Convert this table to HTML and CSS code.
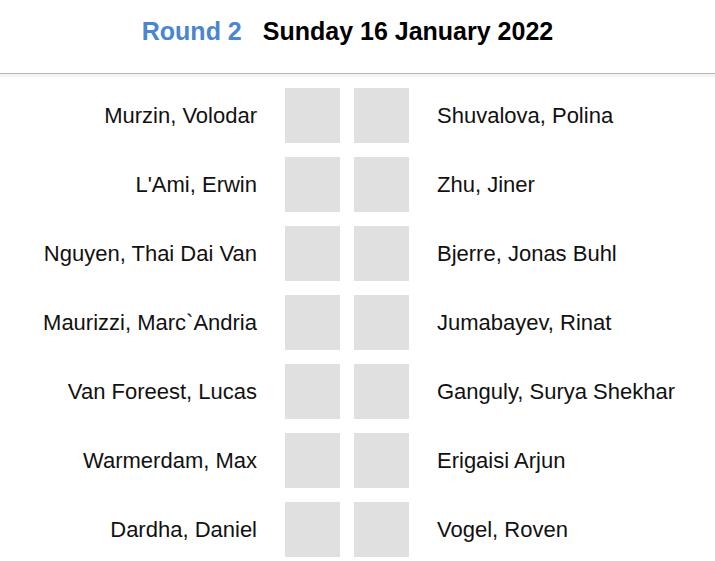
FILE: index.html
```html
<!DOCTYPE html>
<html>
<head>
<meta charset="utf-8">
<link rel="stylesheet" href="styles.css">
</head>
<body>
<header class="head">
  <span class="round">Round 2</span>
  <span class="date">Sunday 16 January 2022</span>
</header>
<main class="pairings">
  <div class="name left">Murzin, Volodar</div><div class="box"></div><div class="box"></div><div class="name right">Shuvalova, Polina</div>
  <div class="name left">L'Ami, Erwin</div><div class="box"></div><div class="box"></div><div class="name right">Zhu, Jiner</div>
  <div class="name left">Nguyen, Thai Dai Van</div><div class="box"></div><div class="box"></div><div class="name right">Bjerre, Jonas Buhl</div>
  <div class="name left">Maurizzi, Marc`Andria</div><div class="box"></div><div class="box"></div><div class="name right">Jumabayev, Rinat</div>
  <div class="name left">Van Foreest, Lucas</div><div class="box"></div><div class="box"></div><div class="name right">Ganguly, Surya Shekhar</div>
  <div class="name left">Warmerdam, Max</div><div class="box"></div><div class="box"></div><div class="name right">Erigaisi Arjun</div>
  <div class="name left">Dardha, Daniel</div><div class="box"></div><div class="box"></div><div class="name right">Vogel, Roven</div>
</main>
</body>
</html>
```
FILE: styles.css
```css
html, body {
  margin: 0;
  padding: 0;
  background: #ffffff;
  font-family: "Liberation Sans", Arial, sans-serif;
  color: #111111;
}
.head {
  height: 74px;
  box-sizing: border-box;
  padding-top: 17px;
  padding-right: 20px;
  border-bottom: 1px solid #b4b4b4;
  box-shadow: 0 3px 0 #f4f4f4;
  display: flex;
  justify-content: center;
  gap: 21px;
  font-size: 25px;
  font-weight: bold;
  line-height: 29px;
}
.round {
  color: #4a86d0;
}
.date {
  color: #000000;
}
.pairings {
  display: grid;
  grid-template-columns: 271px 55px 55px 1fr;
  grid-auto-rows: 55px;
  column-gap: 14px;
  row-gap: 14px;
  padding-top: 14px;
  font-size: 22px;
}
.name {
  display: flex;
  align-items: center;
  white-space: nowrap;
}
.left {
  justify-content: flex-end;
  padding-right: 14px;
}
.right {
  padding-left: 14px;
}
.box {
  background: #e0e0e0;
}
```
